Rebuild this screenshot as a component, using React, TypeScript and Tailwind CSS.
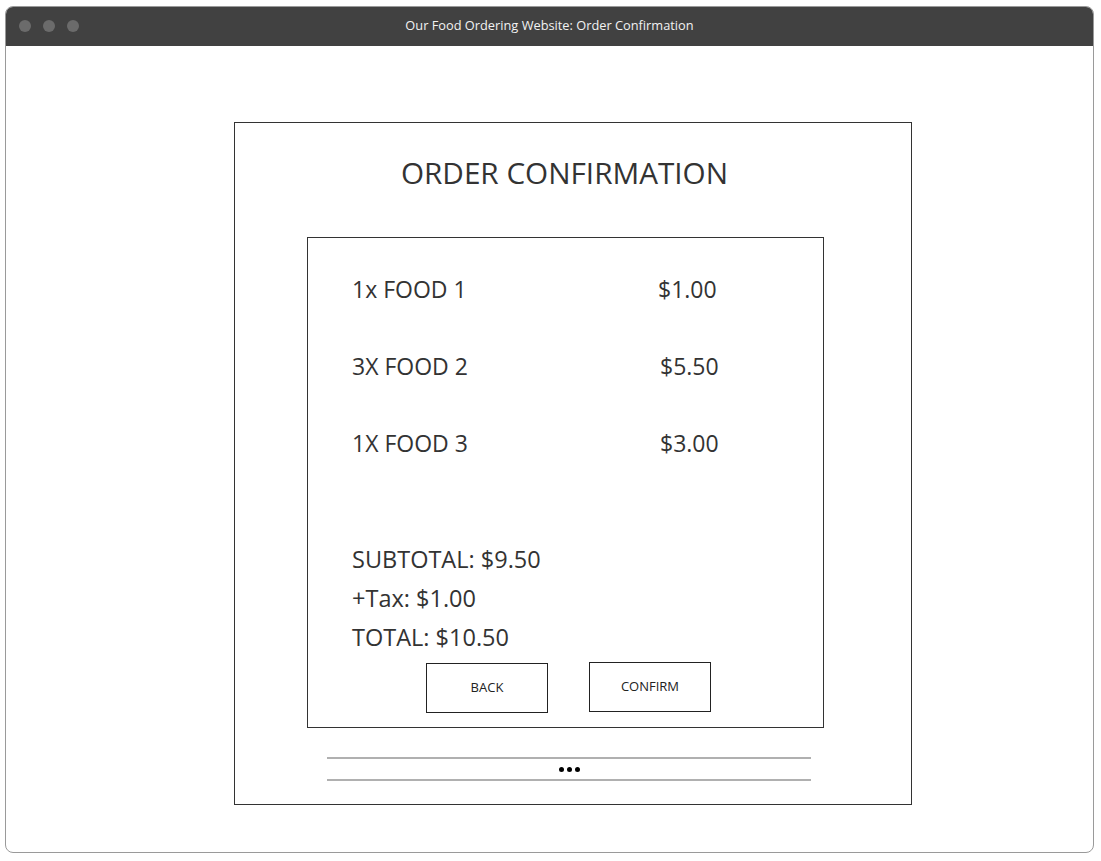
import React from "react";

const font = { fontFamily: '"Open Sans", "Noto Sans", sans-serif' };

function Row({ qty, price, shift }: { qty: string; price: string; shift?: boolean }) {
  return (
    <div className="flex h-[77px] shrink-0 items-center text-[23px] text-[#333333]">
      <span className={shift ? "w-[308px]" : "w-[306px]"}>{qty}</span>
      <span>{price}</span>
    </div>
  );
}

export default function App() {
  return (
    <div
      className="w-[1101px] h-[861px] bg-white pt-[6px] pl-[5px] pr-[7px] pb-[8px]"
      style={font}
    >
      <div className="flex h-full flex-col overflow-hidden rounded-[8px] border border-[#9a9a9a] bg-white">
        <div className="relative flex h-[39px] shrink-0 items-center justify-center bg-[#414141]">
          <div className="absolute left-[13px] top-[13px] flex gap-[12px]">
            <span className="h-[12px] w-[12px] rounded-full bg-[#6b6b6b]" />
            <span className="h-[12px] w-[12px] rounded-full bg-[#6b6b6b]" />
            <span className="h-[12px] w-[12px] rounded-full bg-[#6b6b6b]" />
          </div>
          <span className="pb-[2px] text-[12.8px] text-[#f2f2f2]">
            Our Food Ordering Website: Order Confirmation
          </span>
        </div>
        <div className="flex-1 pl-[228px] pt-[76px]">
          <div className="flex h-[683px] w-[678px] flex-col border border-[#333333]">
            <div className="flex h-[114px] shrink-0 items-center justify-center pb-[14px] pr-[17px] text-[29.7px] text-[#333333]">
              ORDER CONFIRMATION
            </div>
            <div className="ml-[72px] flex h-[491px] w-[517px] shrink-0 flex-col border border-[#333333] pl-[44px] pt-[13px]">
              <Row qty="1x FOOD 1" price="$1.00" />
              <Row qty="3X FOOD 2" price="$5.50" shift />
              <Row qty="1X FOOD 3" price="$3.00" shift />
              <div className="mt-[58px] flex shrink-0 flex-col text-[23.5px] leading-[39px] text-[#333333]">
                <span>SUBTOTAL: $9.50</span>
                <span>+Tax: $1.00</span>
                <span>TOTAL: $10.50</span>
              </div>
              <div className="mt-[5px] flex shrink-0 items-start gap-[41px] pl-[74px]">
                <button className="mt-[1px] flex h-[50px] w-[122px] items-center justify-center border border-[#222222] text-[13px] text-[#222222]">
                  BACK
                </button>
                <button className="flex h-[50px] w-[122px] items-center justify-center border border-[#222222] text-[13px] text-[#222222]">
                  CONFIRM
                </button>
              </div>
            </div>
            <div className="ml-[92px] mt-[29px] flex h-[24px] w-[484px] shrink-0 items-center justify-center border-y-2 border-[#b0b0b0]">
              <span className="flex gap-[3px]">
                <span className="h-[5px] w-[5px] rounded-full bg-black" />
                <span className="h-[5px] w-[5px] rounded-full bg-black" />
                <span className="h-[5px] w-[5px] rounded-full bg-black" />
              </span>
            </div>
          </div>
        </div>
      </div>
    </div>
  );
}
